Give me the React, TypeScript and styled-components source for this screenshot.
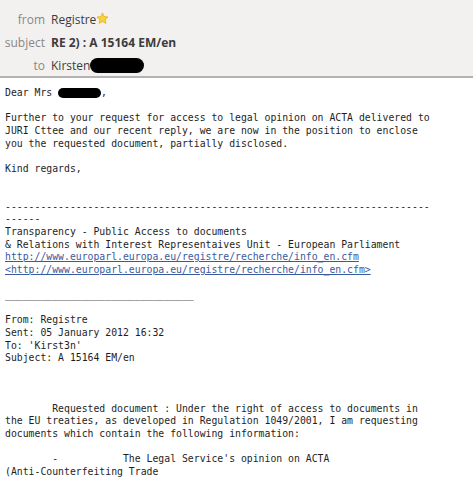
import React from "react";
import styled, { createGlobalStyle } from "styled-components";

const GlobalStyle = createGlobalStyle`
  html, body {
    margin: 0;
    padding: 0;
    background: #ffffff;
  }
`;

const Window = styled.div`
  width: 473px;
  height: 484px;
  overflow: hidden;
  background: #ffffff;
`;

//-- header with from / subject / to
const Header = styled.div`
  box-sizing: border-box;
  height: 78px;
  padding: 8px 0 0 0;
  background: #f2f1f0;
  border-bottom: 2px solid #b4b3b1;
  display: grid;
  grid-template-columns: 45px 1fr;
  grid-auto-rows: 23px;
  column-gap: 6px;
  align-items: center;
  font-family: "Open Sans", "DejaVu Sans", sans-serif;
  font-size: 12px;
`;

const Label = styled.div`
  text-align: right;
  color: #8a8884;
`;

const Value = styled.div<{ $bold?: boolean }>`
  display: flex;
  align-items: center;
  color: #3c3c3c;
  font-weight: ${(p) => (p.$bold ? 700 : 400)};
`;

const Redacted = styled.span<{ $w: number; $h: number }>`
  display: inline-block;
  width: ${(p) => p.$w}px;
  height: ${(p) => p.$h}px;
  background: #000;
  border-radius: ${(p) => p.$h / 2}px;
  vertical-align: middle;
`;

const Body = styled.pre`
  margin: 0;
  padding: 9px 0 0 5px;
  font-family: "DejaVu Sans Mono", monospace;
  font-size: 9.8px;
  line-height: 12.62px;
  color: #1e1e1e;
  white-space: pre;
`;

const Link = styled.a`
  color: #3b5a9e;
  text-decoration: underline;
`;

const Star = () => (
  <svg width="13" height="13" viewBox="0 0 24 24" style={{ marginTop: -3 }}>
    <path
      d="M12 1.8l3.1 6.5 7.1.9-5.2 4.9 1.3 7-6.3-3.4-6.3 3.4 1.3-7L1.8 9.2l7.1-.9z"
      fill="#f7d23a"
      stroke="#e0a80c"
      strokeWidth="1.2"
      strokeLinejoin="round"
    />
  </svg>
);

const url = "http://www.europarl.europa.eu/registre/recherche/info_en.cfm";

export default function App() {
  return (
    <Window>
      <GlobalStyle />
      <Header>
        <Label>from</Label>
        <Value>
          Registre
          <Star />
        </Value>
        <Label>subject</Label>
        <Value $bold>RE 2) : A 15164 EM/en</Value>
        <Label>to</Label>
        <Value>
          Kirsten
          <Redacted $w={54} $h={15} />
        </Value>
      </Header>
      <Body>
        {"Dear Mrs "}
        <Redacted $w={43} $h={10} />
        {",\n\n"}
        {"Further to your request for access to legal opinion on ACTA delivered to\n"}
        {"JURI Cttee and our recent reply, we are now in the position to enclose\n"}
        {"you the requested document, partially disclosed.\n\n"}
        {"Kind regards,\n\n\n"}
        {"-".repeat(72) + "\n"}
        {"------\n"}
        {"Transparency - Public Access to documents\n"}
        {"& Relations with Interest Representaives Unit - European Parliament\n"}
        <Link href="#">{url}</Link>
        {"\n"}
        <Link href="#">{"<" + url + ">"}</Link>
        {"\n\n"}
        {"_".repeat(32) + "\n\n"}
        {"From: Registre\n"}
        {"Sent: 05 January 2012 16:32\n"}
        {"To: 'Kirst3n'\n"}
        {"Subject: A 15164 EM/en\n\n\n\n"}
        {"        Requested document : Under the right of access to documents in\n"}
        {"the EU treaties, as developed in Regulation 1049/2001, I am requesting\n"}
        {"documents which contain the following information:\n\n"}
        {"        -           The Legal Service's opinion on ACTA\n"}
        {"(Anti-Counterfeiting Trade\n"}
      </Body>
    </Window>
  );
}
